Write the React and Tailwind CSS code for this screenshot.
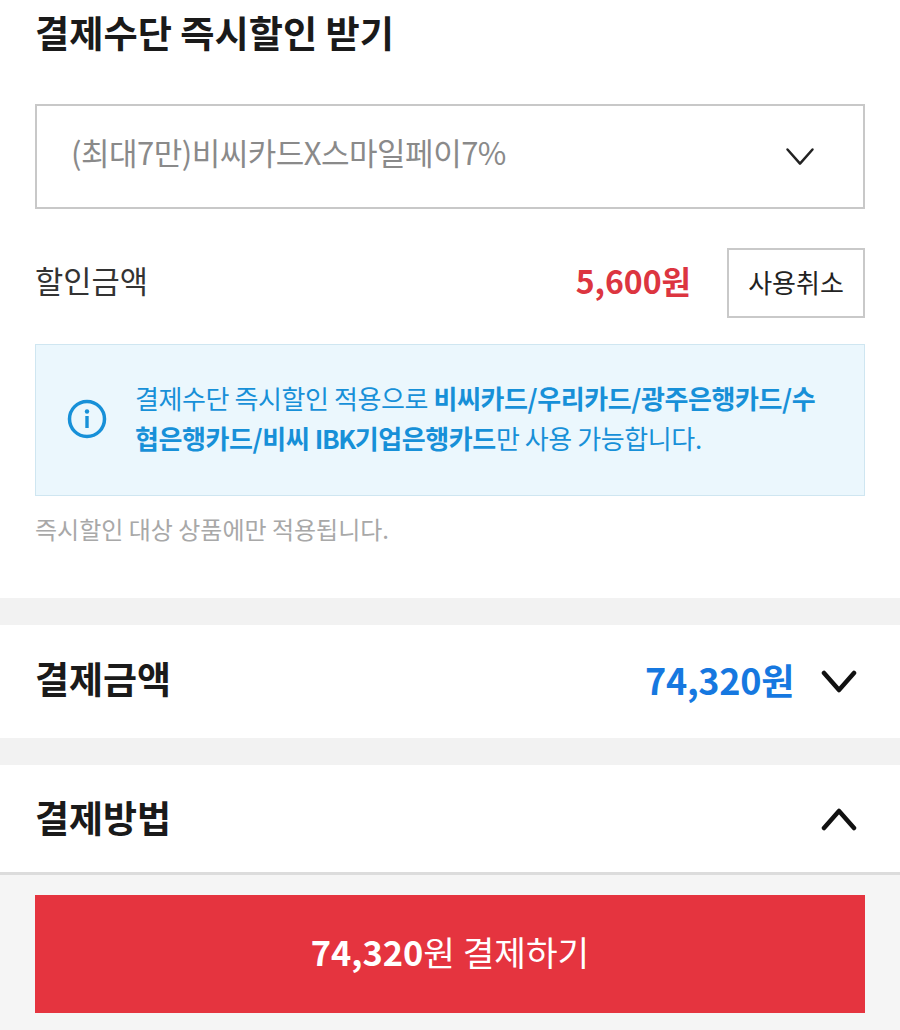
import React from "react";

const Chevron = ({ up, width, className }) => (
  <svg viewBox="0 0 36 24" fill="none" stroke="currentColor" strokeWidth={width} strokeLinecap="round" strokeLinejoin="round" className={className}>
    <path d={up ? "M3 21 18 4 33 21" : "M3 3 18 20 33 3"} />
  </svg>
);

const App = () => (
  <div className="w-[900px] h-[1030px] overflow-hidden flex flex-col bg-white font-['Noto_Sans_CJK_KR','Noto_Sans',sans-serif]">
    {/* Instant discount */}
    <section className="h-[598px] shrink-0 px-[35px]">
      <h2 className="h-[104px] pt-[6px] text-[37.2px] leading-[52px] font-bold text-[#1a1a1a]">결제수단 즉시할인 받기</h2>

      <div className="h-[105px] border-2 border-[#c8c8c8] flex items-center justify-between pl-[34px] pr-[48px]">
        <span className="pb-[10px] text-[31px] leading-[40px] text-[#8a8a8a] tracking-[-0.5px]">(최대7만)비씨카드X스마일페이7%</span>
        <Chevron width={3} className="w-[30px] h-[20px] text-[#222]" />
      </div>

      <div className="mt-[39px] h-[70px] flex items-center">
        <span className="pb-[6px] text-[30.7px] leading-[40px] text-[#333]">할인금액</span>
        <span className="ml-auto pb-[6px] text-[32px] leading-[40px] font-bold text-[#dc3540]">5,600원</span>
        <button className="ml-[36px] w-[138px] h-[70px] pb-[4px] border-2 border-[#c9c9c9] text-[26px] text-[#222]">사용취소</button>
      </div>

      <div className="mt-[26px] h-[152px] bg-[#ebf7fd] border border-[#cfe6f1] flex items-center pl-[31px] pr-[30px]">
        <svg viewBox="0 0 40 40" fill="none" className="w-[40px] h-[40px] shrink-0 -mt-[2px] text-[#1790d8]">
          <circle cx="20" cy="20" r="17.5" stroke="currentColor" strokeWidth="3.5" />
          <rect x="18.3" y="17" width="3.4" height="12" fill="currentColor" />
          <circle cx="20" cy="12.5" r="2.2" fill="currentColor" />
        </svg>
        <p className="ml-[28px] pb-[4px] text-[26px] leading-[40px] text-[#1790d8] tracking-[-0.4px]">
          결제수단 즉시할인 적용으로 <b>비씨카드/우리카드/광주은행카드/수<br />협은행카드/비씨 <span className="tracking-[-1.4px]">IBK</span>기업은행카드</b>만 사용 가능합니다.
        </p>
      </div>

      <p className="mt-[15px] text-[24px] leading-[36px] text-[#a8a8a8]">즉시할인 대상 상품에만 적용됩니다.</p>
    </section>

    <div className="h-[27px] shrink-0 bg-[#f2f2f2]" />

    {/* Payment amount */}
    <section className="h-[113px] shrink-0 px-[35px] flex items-center">
      <h2 className="pb-[8px] text-[37px] leading-[52px] font-bold text-[#1a1a1a]">결제금액</h2>
      <span className="ml-auto pb-[6px] text-[36px] leading-[52px] font-bold tracking-[-0.3px] text-[#1678e0]">74,320원</span>
      <Chevron width={4.5} className="ml-[27px] mr-[8px] w-[36px] h-[24px] text-[#111]" />
    </section>

    <div className="h-[27px] shrink-0 bg-[#f2f2f2]" />

    {/* Payment method */}
    <section className="h-[107px] shrink-0 px-[35px] flex items-center justify-between">
      <h2 className="pb-[4px] text-[37px] leading-[52px] font-bold text-[#1a1a1a]">결제방법</h2>
      <Chevron up width={4.5} className="mr-[8px] w-[36px] h-[24px] text-[#111]" />
    </section>

    {/* Bottom bar */}
    <footer className="flex-1 border-t-[3px] border-[#dcdcdc] bg-[#f5f5f5] px-[35px] pt-[20px]">
      <button className="w-full h-[118px] pb-[4px] bg-[#e5343f] text-white text-[34.4px] flex items-center justify-center">
        <b>74,320</b>원 결제하기
      </button>
    </footer>
  </div>
);

export default App;
